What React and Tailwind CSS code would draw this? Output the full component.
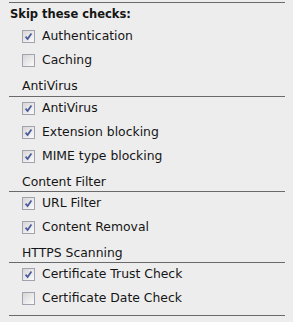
import React from 'react';

const Check = ({ on }) => (
  <span className="w-[13px] h-[13px] shrink-0 border border-[#a2a2ae] bg-gradient-to-br from-[#d6d6d6] to-[#fbfbfb] flex items-center justify-center">
    {on && (
      <svg width="9" height="9" viewBox="0 0 9 9">
        <path d="M1.6 4.6 L3.6 7 L7.4 1.6" stroke="#4a5a9e" strokeWidth="1.7" fill="none" />
      </svg>
    )}
  </span>
);

const Row = ({ label, on }) => (
  <div className="h-[24px] pb-[4px] flex items-center gap-[7px] pl-[13px]">
    <Check on={on} />
    <span className="leading-[14px]">{label}</span>
  </div>
);

const Section = ({ title, items, first }) => (
  <div>
    <div className={first ? 'h-[23px] pt-[5px] pl-[13px] leading-[14px] border-b border-[#6a6a6a]' : 'h-[22px] pt-[5px] pl-[13px] leading-[14px] border-b border-[#6a6a6a]'}>{title}</div>
    <div className="pt-[1px]">
      {items.map(([label, on]) => (
        <Row key={label} label={label} on={on} />
      ))}
    </div>
  </div>
);

export default function App() {
  return (
    <div className="w-[293px] h-[322px] bg-[#ededed] text-[#151515] text-[12.4px] pt-[2px] pl-[9px] pr-[8px]" style={{ fontFamily: '"DejaVu Sans", Verdana, sans-serif' }}>
      <div className="border-t border-[#6a6a6a]">
        <div className="h-[23px] pt-[4px] pl-[1px] font-bold text-[11.5px] leading-[14px]">Skip these checks:</div>
        <Row label="Authentication" on />
        <Row label="Caching" />
      </div>
      <Section first title="AntiVirus" items={[["AntiVirus", true], ["Extension blocking", true], ["MIME type blocking", true]]} />
      <Section title="Content Filter" items={[["URL Filter", true], ["Content Removal", true]]} />
      <Section title="HTTPS Scanning" items={[["Certificate Trust Check", true], ["Certificate Date Check", false]]} />
      <div className="mt-[3px] border-t border-[#6a6a6a]" />
    </div>
  );
}
